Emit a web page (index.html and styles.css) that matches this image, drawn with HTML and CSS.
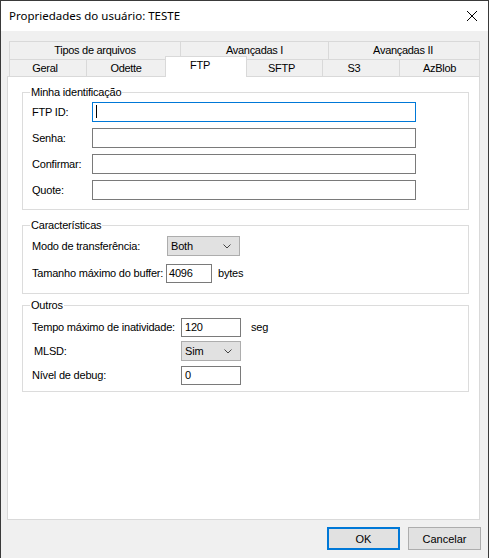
FILE: index.html
```html
<!DOCTYPE html>
<html lang="pt-BR">
<head>
    <meta charset="UTF-8">
    <title>Propriedades do usuário: TESTE</title>
    <link rel="stylesheet" href="styles.css">
</head>
<body>
    <div class="window">
        <div class="titlebar">
            <span class="title">Propriedades do usuário: TESTE</span>
            <svg class="close" width="12" height="12" viewBox="0 0 12 12">
                <path d="M1 1L11 11M11 1L1 11" stroke="#000" stroke-width="1" fill="none"/>
            </svg>
        </div>

        <div class="client">
            <!-- two rows of tabs, FTP is the current one -->
            <div class="tabs">
                <div class="tab-row">
                    <div class="tab t-tipos">Tipos de arquivos</div>
                    <div class="tab t-adv1">Avançadas I</div>
                    <div class="tab t-adv2">Avançadas II</div>
                </div>
                <div class="tab-row low">
                    <div class="tab t-geral">Geral</div>
                    <div class="tab t-odette">Odette</div>
                    <div class="tab t-ftp active">FTP</div>
                    <div class="tab t-sftp">SFTP</div>
                    <div class="tab t-s3">S3</div>
                    <div class="tab t-azblob">AzBlob</div>
                </div>
            </div>

            <div class="page">
                <fieldset class="group ident">
                    <legend>Minha identificação</legend>
                    <div class="field">
                        <label class="lbl-ident">FTP ID:</label>
                        <div class="edit wide focus"><span class="caret"></span></div>
                    </div>
                    <div class="field">
                        <label class="lbl-ident">Senha:</label>
                        <div class="edit wide"></div>
                    </div>
                    <div class="field">
                        <label class="lbl-ident">Confirmar:</label>
                        <div class="edit wide"></div>
                    </div>
                    <div class="field">
                        <label class="lbl-ident">Quote:</label>
                        <div class="edit wide"></div>
                    </div>
                </fieldset>

                <fieldset class="group features">
                    <legend>Características</legend>
                    <div class="field">
                        <label class="lbl-feat">Modo de transferência:</label>
                        <div class="combo combo-mode">
                            <span>Both</span>
                            <svg class="chevron" width="8" height="5" viewBox="0 0 8 5"><path d="M0.5 0.5L4 4L7.5 0.5" stroke="#444" fill="none"/></svg>
                        </div>
                    </div>
                    <div class="field">
                        <label class="lbl-feat buffer-lbl">Tamanho máximo do buffer:</label>
                        <div class="edit buffer">4096</div>
                        <span class="unit">bytes</span>
                    </div>
                </fieldset>

                <fieldset class="group others">
                    <legend>Outros</legend>
                    <div class="field">
                        <label class="lbl-other">Tempo máximo de inatividade:</label>
                        <div class="edit short">120</div>
                        <span class="unit seg">seg</span>
                    </div>
                    <div class="field">
                        <label class="lbl-other mlsd">MLSD:</label>
                        <div class="combo short">
                            <span>Sim</span>
                            <svg class="chevron" width="8" height="5" viewBox="0 0 8 5"><path d="M0.5 0.5L4 4L7.5 0.5" stroke="#444" fill="none"/></svg>
                        </div>
                    </div>
                    <div class="field">
                        <label class="lbl-other">Nível de debug:</label>
                        <div class="edit short">0</div>
                    </div>
                </fieldset>
            </div>

            <div class="buttons">
                <button class="btn default">OK</button>
                <button class="btn">Cancelar</button>
            </div>
        </div>
    </div>
</body>
</html>
```

FILE: styles.css
```css
body {
    margin: 0;
    padding: 0;
    background: #2b2b2b;
    font-family: "Liberation Sans", Arial, sans-serif;
    font-size: 11px;
    letter-spacing: -0.2px;
    color: #000;
}
.window {
    width: 489px;
    height: 558px;
    box-sizing: border-box;
    border: 1px solid #3a3a3a;
    border-bottom: none;
    display: flex;
    flex-direction: column;
    background: #f0f0f0;
}
.titlebar {
    height: 30px;
    background: #fff;
    display: flex;
    align-items: center;
    justify-content: space-between;
    padding: 0 9px 0 8px;
}
.title {
    font-family: "Noto Sans", "Segoe UI", sans-serif;
    font-size: 11.5px;
    letter-spacing: 0;
    margin-top: -1px;
}
.close {
    display: block;
    margin-right: 1px;
}
.client {
    flex: 1;
    display: flex;
    flex-direction: column;
    padding: 10px 7px 0 6px;
}

/* tabs */
.tabs {
    margin-left: 2px;
}
.tab-row {
    display: flex;
}
.tab {
    box-sizing: border-box;
    height: 18px;
    line-height: 17px;
    text-align: center;
    white-space: nowrap;
    letter-spacing: -0.3px;
    border-top: 1px solid #d9d9d9;
    border-left: 1px solid #d9d9d9;
    background: #f0f0f0;
}
.tab:last-child {
    border-right: 1px solid #d9d9d9;
}
.t-tipos { width: 171px; }
.t-adv1 { width: 148px; }
.t-adv2 { width: 152px; padding-right: 2px; }
.t-geral { width: 77px; padding-right: 6px; }
.t-odette { width: 79px; }
.t-ftp { width: 82px; padding-right: 12px; }
.t-sftp { width: 76px; padding-right: 6px; }
.t-s3 { width: 77px; padding-right: 14px; }
.t-azblob { width: 81px; }

.tab-row.low .tab {
    height: 17px;
    line-height: 16px;
}
.tab-row.low .tab.active {
    position: relative;
    z-index: 1;
    height: 21px;
    margin-top: -3px;
    margin-bottom: -1px;
    line-height: 16px;
    background: #fff;
    border-right: 1px solid #d9d9d9;
}
.tab.active + .tab {
    margin-left: -1px;
}

/* page under the tabs */
.page {
    box-sizing: border-box;
    width: 473px;
    height: 444px;
    background: #fff;
    border: 1px solid #d9d9d9;
    padding: 0 10px 0 14px;
}
.group {
    margin: 0;
    border: 1px solid #dcdcdc;
    padding: 0 8px 0 9px;
    min-width: 0;
}
.group legend {
    padding: 0 1px;
    margin-left: -2px;
    line-height: 13px;
}
.ident {
    margin-top: 9px;
    padding-bottom: 9px;
}
.features {
    margin-top: 9px;
    padding-bottom: 10px;
}
.others {
    margin-top: 5px;
    padding-bottom: 6px;
}
.field {
    display: flex;
    align-items: center;
    height: 20px;
}
.ident .field {
    margin-top: 6px;
}
.ident .field:first-of-type {
    margin-top: 3px;
}
.features .field:first-of-type {
    margin-top: 4px;
}
.features .field + .field {
    margin-top: 7px;
}
.others .field:first-of-type {
    margin-top: 5px;
}
.others .field + .field {
    margin-top: 4px;
}
label {
    flex-shrink: 0;
    white-space: nowrap;
}
.lbl-ident {
    width: 60px;
}
.lbl-feat {
    width: 135px;
}
.buffer-lbl {
    width: 134px;
}
.lbl-other {
    width: 149px;
}
.mlsd {
    padding-left: 2px;
    width: 147px;
}

/* edit boxes and combos */
.edit {
    box-sizing: border-box;
    flex-shrink: 0;
    height: 20px;
    border: 1px solid #7a7a7a;
    background: #fff;
    padding: 0 3px;
    line-height: 18px;
}
.edit.wide {
    width: 324px;
}
.edit.focus {
    border-color: #0078d7;
}
.caret {
    display: inline-block;
    width: 1px;
    height: 13px;
    background: #000;
    margin-top: 2px;
    vertical-align: top;
}
.edit.buffer {
    width: 46px;
    height: 19px;
    line-height: 17px;
    padding-left: 2px;
}
.edit.short {
    width: 60px;
    height: 19px;
    line-height: 17px;
}
.combo {
    box-sizing: border-box;
    flex-shrink: 0;
    height: 20px;
    border: 1px solid #adadad;
    background: #e1e1e1;
    display: flex;
    align-items: center;
    justify-content: space-between;
    padding: 0 8px 0 3px;
}
.combo-mode {
    width: 73px;
}
.combo.short {
    width: 60px;
}
.chevron {
    display: block;
}
.unit {
    margin-left: 6px;
}
.unit.seg {
    margin-left: 10px;
}

/* dialog buttons */
.buttons {
    display: flex;
    justify-content: flex-end;
    gap: 8px;
    margin-top: 7px;
}
.btn {
    box-sizing: border-box;
    width: 73px;
    height: 23px;
    background: #e1e1e1;
    border: 1px solid #adadad;
    font-family: "Liberation Sans", Arial, sans-serif;
    font-size: 11px;
    color: #000;
    padding: 0;
}
.btn.default {
    border: 2px solid #0078d7;
}
```
